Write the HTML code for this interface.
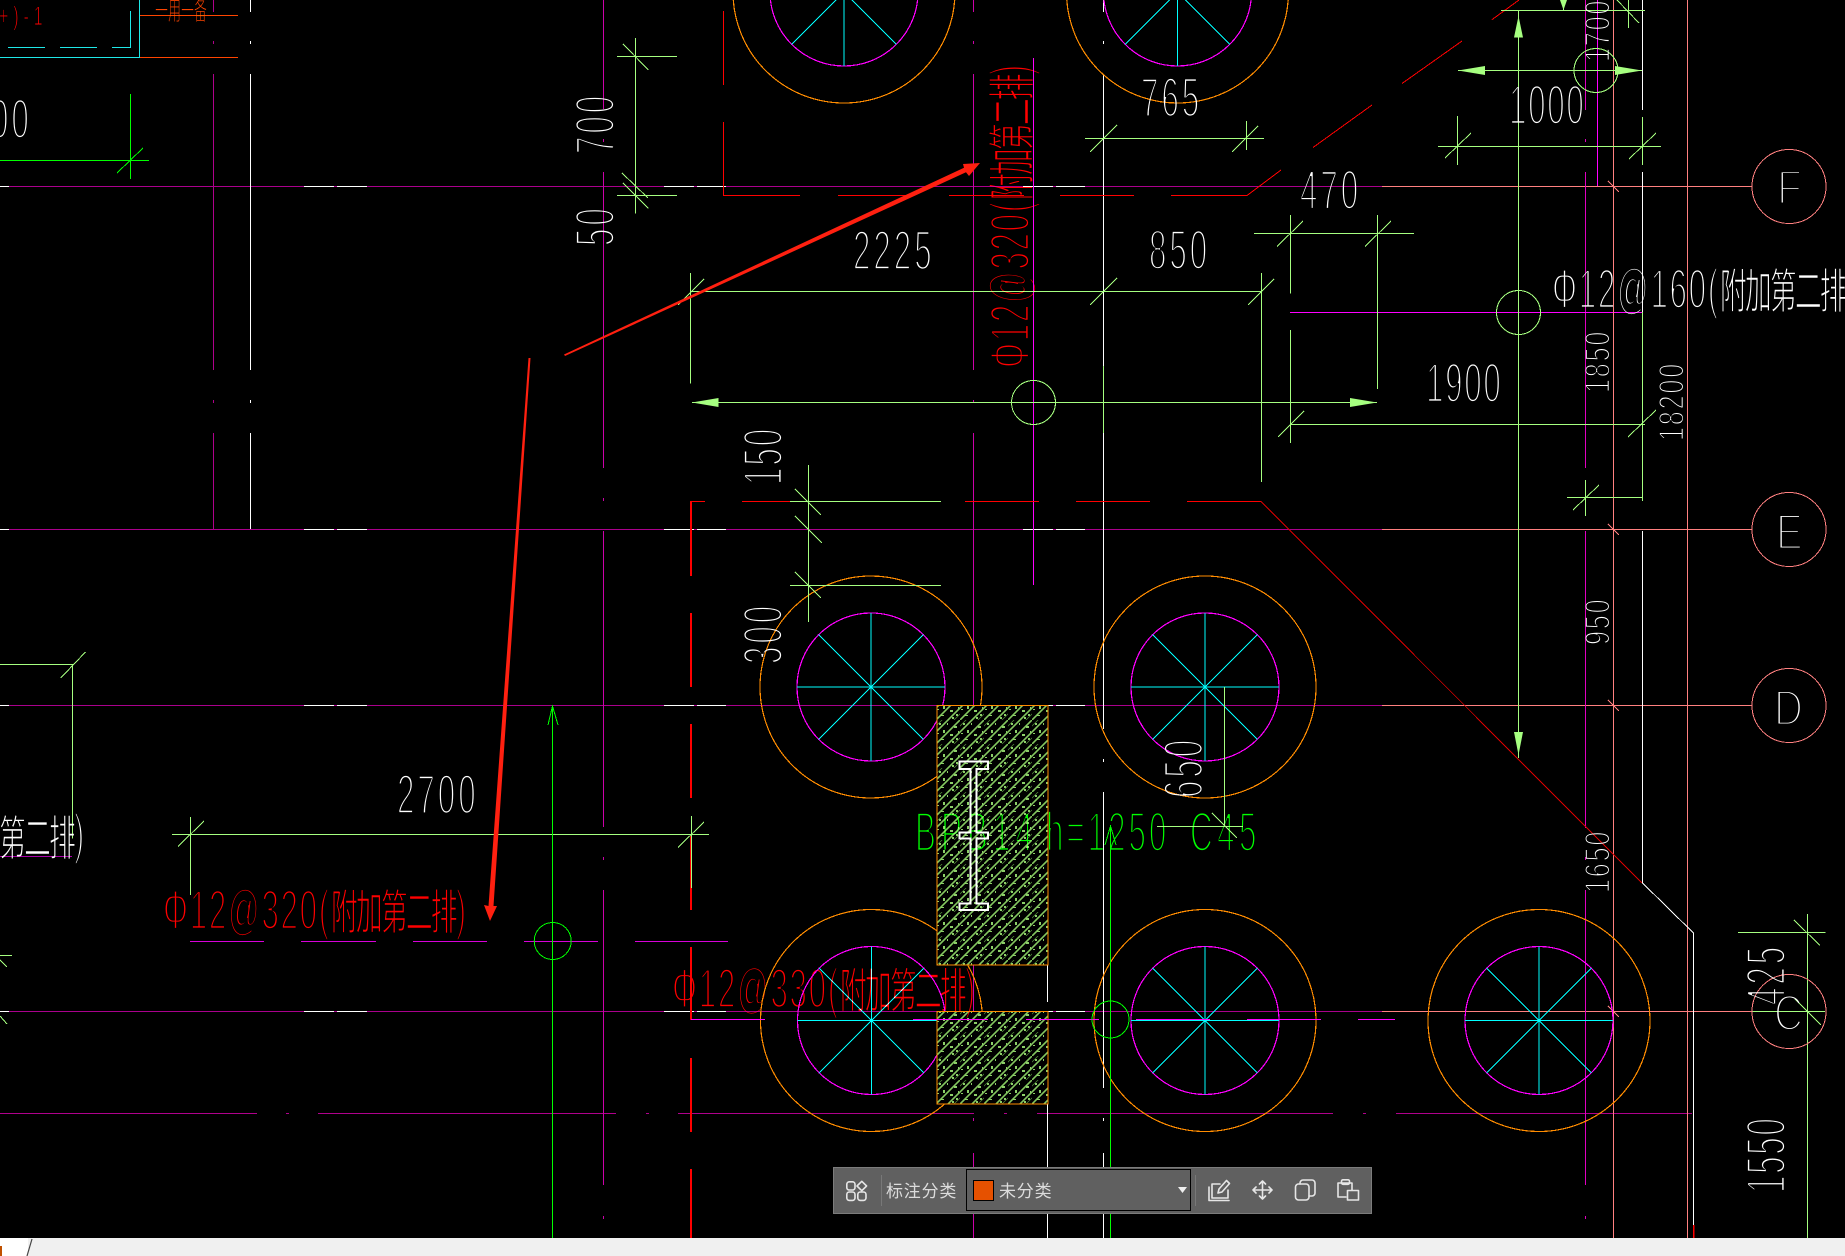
<!DOCTYPE html>
<html lang="zh"><head><meta charset="utf-8"><title>CAD</title>
<style>
html,body{margin:0;padding:0;background:#000;width:1845px;height:1256px;overflow:hidden}
svg{display:block;position:absolute;left:0;top:0}
.L path,.L line,.L circle,.L polyline{fill:none;stroke-width:1}
.t{mix-blend-mode:screen;stroke:#000;font-family:"Liberation Sans","Noto Sans CJK SC",sans-serif}
.d{font-size:56px;letter-spacing:5.3px;stroke-width:2.8px}
.s{font-size:35px;letter-spacing:2.5px;stroke-width:1.7px}
.m{font-size:56px;letter-spacing:3px;stroke-width:2.8px}
.c{font-size:48px;letter-spacing:-3.4px;stroke-width:1.5px}
.w{fill:#fff}.r{fill:#f00}.g{fill:#0f0}
.tb{font-family:"Liberation Sans","Noto Sans CJK SC",sans-serif;font-size:17px;fill:#dcdcdc}
</style></head><body>
<svg width="1845" height="1256" viewBox="0 0 1845 1256" xmlns="http://www.w3.org/2000/svg">
<defs>
<g id="pile" class="L" shape-rendering="crispEdges">
<circle r="111" stroke="#ff8c00" style="stroke-width:1.2"/>
<circle r="74" stroke="#ff00ff" style="stroke-width:1.2"/>
<path stroke="#00ffff" d="M-74 0H74M0 -74V74M-52.3 -52.3L52.3 52.3M-52.3 52.3L52.3 -52.3"/>
</g>
<path id="wd" fill="none" stroke="#fff" d="M0 .5H9M304 .5H334M337 .5H367M664 .5H694M697 .5H726M1023 .5H1053M1056 .5H1085"/>
<path id="tk" fill="none" stroke="#ff8080" d="M-5 -5L6 6"/>
<pattern id="h" width="24" height="24" patternUnits="userSpaceOnUse">
<rect width="24" height="24" fill="#000"/>
<path d="M-3 15L15 -3M9 27L27 9M-3 27L27 -3" stroke="#84c860" stroke-width="1.6" fill="none"/>
<path d="M-3 9L9 -3M15 27L27 15" stroke="#5a9440" stroke-width=".7" fill="none"/>
<path fill="#8ccf68" d="M3 3h2v2h-2zM18 6h3v2h-3zM7 10h2v3h-2zM14 14h3v2h-3zM20 18h2v2h-2zM5 19h3v1h-3zM11 3h1v2h-1zM16 21h2v2h-2zM1 13h2v1h-2zM22 11h1v2h-1z"/>
</pattern>
</defs>
<rect width="1845" height="1256" fill="#000"/>

<g class="L" shape-rendering="crispEdges">
<!-- top-left block -->
<path stroke="#1fe8e8" d="M139.5 0V57.5H0M130.5 11V47.5H112M97 47.5H60M45 47.5H8"/>
<path stroke="#ff4500" d="M140 15.5H238M140 57.5H238"/>
<path stroke="#0f0" d="M130.5 94V179M0 160.5H149M117 173L143 148"/>
<!-- grid rows -->
<path stroke="#aa008c" d="M0 186.5H1382M0 529.5H1382M0 705.5H1382M0 1011.5H1382"/>
<path stroke="#ff8080" d="M1382 186.5H1752M1382 529.5H1752M1382 705.5H1752M1382 1011.5H1752"/>
<use href="#wd" y="186"/><use href="#wd" y="529"/><use href="#wd" y="705"/><use href="#wd" y="1011"/>
<path stroke="#b0008c" d="M0 1113.5H257M286 1113.5H289M318 1113.5H616M646 1113.5H649M678 1113.5H974M1004 1113.5H1007M1037 1113.5H1333M1363 1113.5H1366M1396 1113.5H1692"/>
<!-- vertical purple -->
<path stroke="#b0008c" d="M213.5 0V12M213.5 41V44M213.5 74V370M213.5 400V403M213.5 433V529"/>
<path stroke="#fff" d="M250.5 0V12M250.5 41V44M250.5 74V370M250.5 400V403M250.5 433V529"/>
<path stroke="#cc00aa" d="M603.5 0V109M603.5 139V142M603.5 172V468M603.5 498V501M603.5 531V827M603.5 857V860M603.5 890V1185M603.5 1216V1219"/>
<path stroke="#cc00aa" d="M973.5 0V12M973.5 41V44M973.5 74V370M973.5 400V403M973.5 433V1088M973.5 1118V1121M973.5 1153V1238"/>
<path stroke="#e000c0" d="M1585.5 0V110M1585.5 139V142M1585.5 172V468M1585.5 498V501M1585.5 531V828M1585.5 857V860M1585.5 890V1185M1585.5 1216V1219"/>
<path stroke="#f0f" d="M1033.5 58V585M1597.5 0V186"/>
<path stroke="#f0f" d="M1290 312.5H1642"/>
<!-- salmon verticals -->
<path stroke="#ff8080" d="M1613.5 0V1238M1687.5 0V1238"/>
<use href="#tk" x="1613" y="186"/><use href="#tk" x="1613" y="529"/><use href="#tk" x="1613" y="705"/><use href="#tk" x="1613" y="1011"/>
<!-- white verticals -->
<path stroke="#fff" d="M1103.5 0V12M1103.5 41V44M1103.5 74V366M1103.5 433V729M1103.5 759V762M1103.5 792V1088M1103.5 1118V1121M1103.5 1153V1238"/>
<path stroke="#fff" d="M1047.5 705V1002M1047.5 1011V1238"/>
<path stroke="#fff" d="M1642.5 0V110M1642.5 172V312M1642.5 531V883L1693.5 933V1225"/>
<path stroke="#f00" style="stroke-width:1.5" d="M1693.5 1225V1238"/>
<!-- dashed red -->
<path stroke="#f00" d="M723.5 11V85M723.5 122V195.5H800M838 195.5H912M949 195.5H1024M1060 195.5H1134M1171 195.5H1247L1281 170M1313 147.5L1372 105M1402 83.5L1462 41M1492 19.6L1519 0"/>
<path stroke="#f00" d="M691 501.5H705M742 501.5H790M965 501.5H1039M1076 501.5H1150M1187 501.5H1261"/>
<path stroke="#d80000" d="M1261 501.5L1642 883"/>
<path stroke="#f00" style="stroke-width:2" d="M691 501V576M691 613V687M691 724V798M691 836V910M691 947V1020M691 1058V1132M691 1169V1238"/>
<!-- magenta dashes -->
<path stroke="#d800d8" d="M190 941.5H264M301 941.5H376M413 941.5H487M524 941.5H598M635 941.5H728"/>
<path stroke="#a800a8" d="M0 856.5H72"/>
</g>

<!-- piles -->
<use href="#pile" x="844" y="-8"/><use href="#pile" x="1177.5" y="-8"/>
<use href="#pile" x="871" y="687"/><use href="#pile" x="1205" y="687"/>
<use href="#pile" x="871.5" y="1020.5"/><use href="#pile" x="1205" y="1020.5"/><use href="#pile" x="1539" y="1020.5"/>

<!-- hatch -->
<g shape-rendering="crispEdges">
<rect x="937" y="705.5" width="111" height="259.5" fill="url(#h)" stroke="#ff8c00" stroke-width="1.2"/>
<rect x="937" y="1011.5" width="111" height="92.5" fill="url(#h)" stroke="#ff8c00" stroke-width="1.2"/>
<path fill="none" stroke="#fff" stroke-width="1.6" d="M970.5 769H959.5V761.5H988V769H976.5V832.5H988V838.5H976.5V903.5H988V910H959.5V903.5H970.5V838.5H959.5V832.5H970.5Z"/>
</g>

<g class="L" shape-rendering="crispEdges">
<path stroke="#f0f" d="M691 1019.5H765M913 1019.5H988M1026 1019.5H1099M1136 1019.5H1210M1247 1019.5H1321M1358 1019.5H1395"/>
<path stroke="#a6ff80" d="
M635.5 38V213.5M617 56.5H677M617 195.5H677M623 44L648.5 70M623 183L648.5 208.5M622 173L648 198
M690.5 273V383.5M690.5 291.5H1261M678 305L704 279M1090 305L1117 278M1261.5 273V482M1248 305L1274 279
M692 402.5H1350M1377 402.5H1350M1011 402.5H1377
M1254 233.5H1414M1290.5 215V293.5M1290.5 330V443M1277 246.5L1303 221M1377.5 215V389M1365 246.5L1391 221
M1290 424.5H1645M1278 437L1304 411M1628 437L1656 410
M1085 138.5H1264M1090 152L1117 125M1246.5 121V150M1232 152L1258 126
M1501 10.5H1645M1628.5 0V28M1617 0L1639 23M1563.5 0V10
M1458 70.5H1642
M1438 146.5H1661M1457.5 116V165M1445 158L1471 133M1642.5 117V165M1629 159L1656 133
M1518.5 10V758
M1642.5 312V501M1567 497.5H1642.5M1585.5 480V516M1573 510L1599 485
M1628 437L1656 410
M808.5 465V622M790 501.5H941M790 585.5H941M795 489L821 515M795 516L822 543M795 572L821 598
M172 834.5H709M190.5 817V895M178 846.5L204 821M691.5 816V888M678 847.5L704 822
M0 664.5H72.5V838.5M60.7 678L85.5 652
M0 955.5H12M0 960L7 967M0 1016L7 1024
M1224.5 687V826M1157 826.5H1243M1212 813L1237 838
M1807.5 914V1238M1738 932.5H1825.5M1794 920L1820 945.5M1752 1011.5H1825M1795 999L1821 1025"/>
<path stroke="#a6ff80" d="M1103.5 366V433"/>
<circle cx="1596" cy="70.5" r="22" stroke="#a6ff80"/>
<circle cx="1518.5" cy="312.5" r="22" stroke="#a6ff80"/>
<circle cx="1033.5" cy="402.5" r="22" stroke="#a6ff80"/>
<path stroke="#0f0" d="M1110.5 826V1238"/>
<path stroke="#0f0" d="M1105 845L1110.5 826L1116 845M552.5 706V1238M548 725L552.5 706L558 725"/>
<circle cx="552.7" cy="941" r="18.5" stroke="#0f0"/>
<circle cx="1110.5" cy="1019.5" r="18.5" stroke="#0f0"/>
<circle cx="1789" cy="186.5" r="37" stroke="#ff8080"/>
<circle cx="1789" cy="529.5" r="37" stroke="#ff8080"/>
<circle cx="1789" cy="705.5" r="37" stroke="#ff8080"/>
<circle cx="1789" cy="1011.5" r="37" stroke="#ff8080"/>
</g>
<g fill="#a6ff80">
<polygon points="692,402.5 718.5,398 718.5,407"/><polygon points="1377,402.5 1350,398 1350,407"/>
<polygon points="1458,70.5 1485,66 1485,75"/><polygon points="1642,70.5 1615,66 1615,75"/>
<polygon points="1518.5,16 1514,37.5 1523,37.5"/><polygon points="1518.5,755 1514,732 1523,732"/>
<polygon points="1560,0 1567,0 1563.5,10"/>
</g>

<!-- white dims -->
<text class="t d w" transform="translate(853,269.5) scale(.56,1)">2225</text>
<text class="t d w" transform="translate(1149,269) scale(.56,1)">850</text>
<text class="t d w" transform="translate(1141,116.5) scale(.56,1)">765</text>
<text class="t d w" transform="translate(1300,209) scale(.56,1)">470</text>
<text class="t d w" style="letter-spacing:3px" transform="translate(1509,124) scale(.56,1)">1000</text>
<text class="t d w" style="letter-spacing:3px" transform="translate(1426,402) scale(.56,1)">1900</text>
<text class="t d w" transform="translate(397,813.5) scale(.56,1)">2700</text>
<text class="t d w" transform="translate(-9,138) scale(.56,1)">00</text>
<text class="t d w" transform="translate(614,154) rotate(-90) scale(.56,1)">700</text>
<text class="t d w" transform="translate(614,246) rotate(-90) scale(.56,1)">50</text>
<text class="t d w" style="letter-spacing:3.5px" transform="translate(782,485) rotate(-90) scale(.56,1)">150</text>
<text class="t d w" transform="translate(782,664) rotate(-90) scale(.56,1)">300</text>
<text class="t d w" transform="translate(1202.5,798) rotate(-90) scale(.56,1)">650</text>
<text class="t d w" transform="translate(1785,1005) rotate(-90) scale(.56,1)">425</text>
<text class="t d w" style="letter-spacing:3px" transform="translate(1785,1193) rotate(-90) scale(.56,1)">1550</text>
<text class="t s w" transform="translate(1609.5,62) rotate(-90) scale(.72,1)">1700</text>
<text class="t s w" transform="translate(1609.5,393) rotate(-90) scale(.72,1)">1850</text>
<text class="t s w" transform="translate(1683.5,441) rotate(-90) scale(.72,1)">18200</text>
<text class="t s w" transform="translate(1609.5,645) rotate(-90) scale(.72,1)">950</text>
<text class="t s w" transform="translate(1609.5,893) rotate(-90) scale(.72,1)">1650</text>

<!-- annotations -->
<text class="t m w" transform="translate(1552,308) scale(.56,1)">Φ12@160(<tspan class="c">附加第二排</tspan></text>
<text class="t c w" transform="translate(-1,855) scale(.56,1)">第二排<tspan class="m" dy="-2" style="letter-spacing:0">)</tspan></text>
<text class="t m r" transform="translate(163,929) scale(.56,1)">Φ12@320(<tspan class="c">附加第二排</tspan><tspan class="m">)</tspan></text>
<text class="t m r" transform="translate(672,1007.5) scale(.56,1)">Φ12@330(<tspan class="c">附加第二排</tspan><tspan class="m">)</tspan></text>
<text class="t m r" transform="translate(1029,368) rotate(-90) scale(.56,1)">Φ12@320(<tspan class="c">附加第二排</tspan><tspan class="m">)</tspan></text>
<text class="t" fill="#ff4500" style="font-size:26px;stroke-width:.9px" transform="translate(155,20) scale(.5,1)">一用一备</text>
<text class="t r" style="font-size:27px;letter-spacing:8px;stroke-width:1.1px" transform="translate(-1,25) scale(.6,1)">+)-1</text>

<!-- BPB label -->
<text class="t d g" style="letter-spacing:9px" transform="translate(915,851) scale(.56,1)">BPB14</text>
<text class="t d g" transform="translate(1046,851) scale(.56,1)">h=1250</text>
<text class="t d g" style="letter-spacing:8px" transform="translate(1190,851) scale(.56,1)">C45</text>

<!-- axis letters -->
<g>
<text class="t w" style="font-size:48px;stroke-width:3px" transform="translate(1777,204) scale(.85,1)">F</text>
<text class="t w" style="font-size:50px;stroke-width:3px" transform="translate(1776,549) scale(.8,1)">E</text>
<text class="t w" style="font-size:50px;stroke-width:3px" transform="translate(1774,725) scale(.8,1)">D</text>
<text class="t w" style="font-size:50px;stroke-width:3px" transform="translate(1774,1030) scale(.8,1)">C</text>
</g>

<!-- red arrows -->
<polygon fill="#ff2010" points="564,354.5 964,167.7 963,164 980,163 969,176 966,172.3 565,356"/>
<polygon fill="#ff2010" points="528.5,358 530.5,358 493.5,906 497,906 490,921 484,905 488.5,906"/>

<!-- bottom bar -->
<rect x="0" y="1238" width="1845" height="18" fill="#f0f0f0"/>
<rect x="0" y="1238" width="28" height="18" fill="#fff"/>
<rect x="0" y="1246" width="2" height="10" fill="#c05000"/>
<path d="M32 1239L27 1256" stroke="#444" stroke-width="1.2" fill="none"/>

<!-- toolbar -->
<rect x="833.5" y="1167.5" width="538" height="46" fill="#606060" stroke="#7c7c7c"/>
<g shape-rendering="crispEdges">
<path d="M881.5 1175V1206M1195.5 1175V1206" stroke="#787878" fill="none"/>
<rect x="966.5" y="1169.5" width="224" height="41" fill="#606060" stroke="#000"/>
<rect x="973.5" y="1180.5" width="20" height="20" fill="#e65100" stroke="#000"/>
</g>
<polygon points="1178,1187 1187,1187 1182.5,1193" fill="#f0f0f0"/>
<text class="tb" x="886" y="1197" style="letter-spacing:.8px">标注分类</text>
<text class="tb" x="999" y="1197" style="letter-spacing:.8px">未分类</text>
<g fill="none" stroke="#e6e6e6" stroke-width="1.6" stroke-linejoin="round" stroke-linecap="round">
<rect x="846.8" y="1192" width="8.2" height="8.4" rx="2.5"/>
<rect x="857.8" y="1192" width="8.2" height="8.4" rx="2.5"/>
<rect x="846.8" y="1181.8" width="8.2" height="8.2" rx="2.5"/>
<path d="M861.8 1181.3L866.6 1186L861.8 1190.7L857 1186Z"/>
<path d="M1220 1184H1212V1198H1228V1190M1209 1187V1200.5H1229"/>
<path d="M1218 1193L1219 1189L1226.5 1180.5L1229.5 1183.5L1222 1192Z"/>
<path d="M1262.5 1181V1199M1253 1190H1272M1259.5 1184L1262.5 1181L1265.5 1184M1259.5 1196L1262.5 1199L1265.5 1196M1256 1187L1253 1190L1256 1193M1269 1187L1272 1190L1269 1193"/>
<rect x="1295.5" y="1184" width="13.5" height="16" rx="3"/>
<path d="M1300 1184V1183A3 3 0 0 1 1303 1180H1312A3 3 0 0 1 1315 1183V1193A3 3 0 0 1 1312 1196H1309"/>
<path d="M1346 1197H1338V1183H1352V1190"/>
<rect x="1341.5" y="1179.8" width="8" height="4.5" rx="1.5"/>
<rect x="1347.5" y="1190.5" width="11" height="9.5"/>
</g>
</svg>
</body></html>
